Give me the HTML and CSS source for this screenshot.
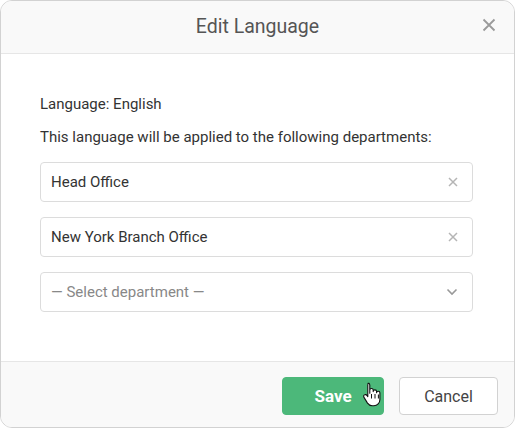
FILE: index.html
```html
<!DOCTYPE html>
<html>
<head>
<meta charset="utf-8">
<link rel="stylesheet" href="styles.css">
</head>
<body>
<div class="dialog">
  <div class="header">
    <div class="title">Edit Language</div>
    <span class="close"><svg width="14" height="14" viewBox="0 0 14 14"><path d="M1.5 1.5L12.5 12.5M12.5 1.5L1.5 12.5" stroke="#9a9a9a" stroke-width="1.8" fill="none"/></svg></span>
  </div>
  <div class="body">
    <p class="line">Language: English</p>
    <p class="line second">This language will be applied to the following departments:</p>
    <div class="field">
      <span class="value">Head Office</span>
      <svg class="x" width="10" height="10" viewBox="0 0 10 10"><path d="M1 1L9 9M9 1L1 9" stroke="#b5b5b5" stroke-width="1.5" fill="none"/></svg>
    </div>
    <div class="field">
      <span class="value">New York Branch Office</span>
      <svg class="x" width="10" height="10" viewBox="0 0 10 10"><path d="M1 1L9 9M9 1L1 9" stroke="#b5b5b5" stroke-width="1.5" fill="none"/></svg>
    </div>
    <div class="field">
      <span class="value placeholder">— Select department —</span>
      <svg class="chev" width="12" height="8" viewBox="0 0 12 8"><path d="M1.5 1.5L6 6L10.5 1.5" stroke="#999" stroke-width="1.6" fill="none"/></svg>
    </div>
  </div>
  <div class="footer">
    <button class="btn save">Save</button>
    <button class="btn cancel">Cancel</button>
    <svg class="cursor" width="22" height="26" viewBox="0 0 22 26">
      <path d="M6 2.2c1 0 1.8.8 1.8 1.8v8.3V9.2c0-1 .8-1.7 1.7-1.7s1.7.8 1.7 1.7v1.4c0-1 .8-1.7 1.7-1.7s1.7.8 1.7 1.7v1.2c0-.9.8-1.6 1.7-1.6s1.6.7 1.6 1.6v6.6c0 3.6-2.6 6.3-6 6.3h-1.6c-2.2 0-3.6-.9-4.8-2.6L2 16.4c-.6-.9-.4-2 .4-2.5.8-.6 1.9-.3 2.5.5l.9 1.2V4c0-1 .2-1.8 1.2-1.8z" fill="#fff" stroke="#111" stroke-width="1.1" stroke-linejoin="round"/>
      <path d="M9.5 13v4.5M13 13v4.5M16.4 13.5v4" stroke="#111" stroke-width="1" fill="none"/>
    </svg>
  </div>
</div>
</body>
</html>
```
FILE: styles.css
```css
html, body {
  margin: 0;
  padding: 0;
  background: #fff;
}
body {
  font-family: Roboto, "Liberation Sans", Arial, sans-serif;
  color: #333;
}
.dialog {
  width: 515px;
  height: 428px;
  box-sizing: border-box;
  border: 1px solid #d2d2d2;
  border-radius: 12px;
  overflow: hidden;
  display: flex;
  flex-direction: column;
  background: #fff;
}
.header {
  height: 52px;
  flex: none;
  background: #f9f9f9;
  border-bottom: 1px solid #e6e6e6;
  display: flex;
  align-items: center;
  justify-content: center;
  position: relative;
}
.title {
  font-size: 19.5px;
  color: #555;
  margin-top: -2px;
}
.close {
  position: absolute;
  right: 18px;
  top: 17px;
  display: flex;
}
.body {
  flex: 1;
  padding: 40px 41px 0 39px;
}
.line {
  margin: 0;
  font-size: 15px;
  line-height: 20px;
  color: #333;
}
.second {
  margin-top: 13px;
  margin-bottom: 15px;
}
.field {
  height: 40px;
  box-sizing: border-box;
  border: 1px solid #dcdcdc;
  border-radius: 4px;
  display: flex;
  align-items: center;
  padding: 0 13px 0 10px;
  margin-bottom: 15px;
}
.value {
  flex: 1;
  font-size: 15px;
  color: #333;
}
.placeholder {
  color: #888;
}
.x {
  margin-right: 1px;
}
.chev {
  margin-right: 1px;
}
.footer {
  flex: none;
  height: 66px;
  box-sizing: border-box;
  background: #f9f9f9;
  border-top: 1px solid #e6e6e6;
  display: flex;
  justify-content: flex-end;
  align-items: flex-start;
  gap: 15px;
  padding: 15px 16px 0 0;
  position: relative;
}
.btn {
  height: 38px;
  border-radius: 4px;
  font-family: Roboto, "Liberation Sans", Arial, sans-serif;
  font-size: 16px;
  cursor: pointer;
  padding: 0;
}
.save {
  width: 102px;
  background: #4cb87a;
  border: 1px solid #4cb87a;
  color: #fff;
  font-weight: bold;
  font-size: 17px;
}
.cancel {
  width: 99px;
  background: #fff;
  border: 1px solid #d2d2d2;
  color: #444;
}
.cursor {
  position: absolute;
  left: 361px;
  top: 19px;
}
```
